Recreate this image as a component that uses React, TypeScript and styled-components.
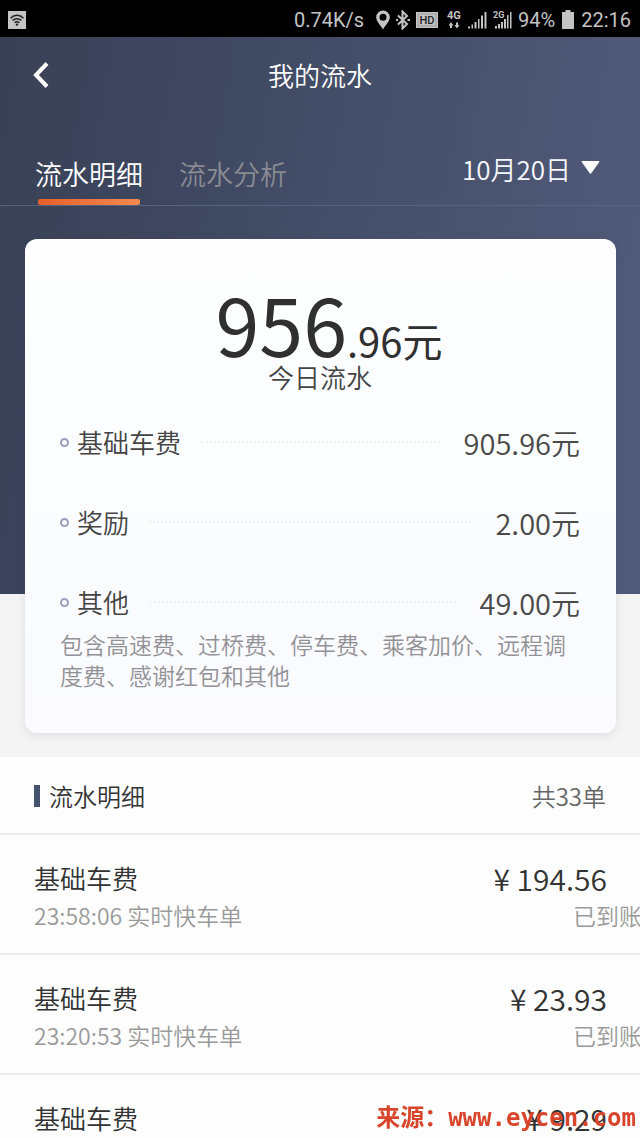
import React from "react";
import styled, { createGlobalStyle } from "styled-components";

const GlobalStyle = createGlobalStyle`
  *, *::before, *::after { box-sizing: border-box; }
  body {
    margin: 0;
    background: #fdfdfd;
    font-family: "Noto Sans CJK SC", sans-serif;
    font-weight: 350;
    color: #333;
  }
  h1, h2, p, ul, dl, dd, dt { margin: 0; padding: 0; font-weight: inherit; }
  button { font: inherit; color: inherit; background: none; border: 0; padding: 0; cursor: pointer; }
`;

const Screen = styled.div`
  height: 100vh;
  overflow: hidden;
  display: flex;
  flex-direction: column;
  > * { flex-shrink: 0; }
`;

const StatusBar = styled.div`
  height: 37px;
  padding: 2px 9px 0 8px;
  display: flex;
  align-items: center;
  justify-content: space-between;
  background: #000;
  color: #c4c4c4;
  font: 400 20px/24px Roboto, sans-serif;
  svg { display: block; }
`;

const StatusGroup = styled.div`
  display: flex;
  align-items: center;
  gap: 6px;
`;

const NetSpeed = styled.span`
  margin-right: 6px;
`;

const Hero = styled.header`
  padding-bottom: 24px;
  background: linear-gradient(100deg, #384154 0%, #3f4760 28%, #444f69 50%, #4d5775 80%, #505a7a 100%)
    no-repeat 0 0 / 100% calc(100% - 163px) #f4f4f4;
`;

const TitleBar = styled.div`
  height: 76px;
  padding: 0 30px;
  display: grid;
  grid-template-columns: 24px 1fr 24px;
  align-items: center;
  color: #fff;
`;

const BackButton = styled.button`
  display: flex;
  svg { display: block; }
`;

const Title = styled.h1`
  font-size: 26px;
  line-height: 38px;
  text-align: center;
`;

const TabBar = styled.nav`
  height: 93px;
  padding: 0 40px 0 35px;
  display: flex;
  justify-content: space-between;
  align-items: flex-end;
  border-bottom: 1px solid #566480;
`;

const Tabs = styled.div`
  display: flex;
  gap: 36px;
`;

const Tab = styled.button<{ $active?: boolean }>`
  height: 51px;
  display: flex;
  flex-direction: column;
  justify-content: space-between;
  align-items: center;
  font-size: 27px;
  line-height: 40px;
  color: ${(p) => (p.$active ? "#fff" : "#8a8b93")};
  &::after {
    content: "";
    width: 102px;
    height: 6px;
    border-radius: 2px;
    background: ${(p) => (p.$active ? "linear-gradient(90deg, #e8602c, #f08a4c)" : "transparent")};
  }
`;

const DateButton = styled.button`
  height: 56px;
  display: flex;
  align-items: flex-start;
  gap: 10px;
  font-size: 26px;
  line-height: 40px;
  color: #f6f8ff;
  svg { display: block; margin-top: 12px; }
`;

const Card = styled.section`
  margin: 33px 24px 0 25px;
  padding: 46px 36px 42px 35px;
  border-radius: 12px;
  background: linear-gradient(180deg, #fefefe, #fbfdff 50%, #fafaff);
  box-shadow: 0 2px 8px rgba(60, 60, 90, 0.12);
`;

const Total = styled.p`
  height: 75px;
  padding-left: 18px;
  font-size: 40px;
  font-weight: 400;
  line-height: 76px;
  text-align: center;
  white-space: nowrap;
  color: #303030;
`;

const TotalWhole = styled.span`
  font-size: 79px;
`;

const TotalLabel = styled.p`
  font-size: 26px;
  line-height: 34px;
  text-align: center;
  color: #444;
`;

const Breakdown = styled.dl`
  margin-top: 28px;
  display: grid;
  row-gap: 40px;
`;

const FeeRow = styled.div`
  height: 40px;
  display: flex;
  align-items: center;
`;

const FeeName = styled.dt`
  display: flex;
  align-items: center;
  gap: 8px;
  font-size: 26px;
  line-height: 40px;
  color: #444;
  &::before {
    content: "";
    width: 9px;
    height: 9px;
    border: 2px solid #9a9fbd;
    border-radius: 50%;
  }
`;

const Leader = styled.span`
  flex: 1;
  margin: 0 24px 0 20px;
  border-top: 2px dotted #efeef5;
`;

const FeeAmount = styled.dd`
  font-size: 29px;
  line-height: 40px;
  color: #4a4a4a;
`;

const Note = styled.p`
  margin-top: 7px;
  font-size: 23px;
  line-height: 31px;
  color: #929296;
`;

const ListHeader = styled.div`
  height: 78px;
  padding: 2px 34px 0 34px;
  display: flex;
  align-items: center;
  justify-content: space-between;
  border-bottom: 2px solid #ececec;
  font-size: 24px;
  line-height: 36px;
`;

const ListTitle = styled.h2`
  display: flex;
  align-items: center;
  gap: 9px;
  font-size: 24px;
  &::before {
    content: "";
    width: 6px;
    height: 22px;
    background: #44546c;
  }
`;

const Count = styled.span`
  color: #666;
`;

const Records = styled.ul`
  list-style: none;
`;

const RecordItem = styled.li`
  height: 120px;
  padding: 23px 0 0 34px;
  border-bottom: 2px solid #ececec;
`;

const RecordLine = styled.div<{ $sub?: boolean }>`
  display: flex;
  justify-content: space-between;
  padding-right: ${(p) => (p.$sub ? 0 : 33)}px;
  margin-right: ${(p) => (p.$sub ? -2 : 0)}px;
  font-size: ${(p) => (p.$sub ? 23 : 26)}px;
  line-height: ${(p) => (p.$sub ? 34 : 40)}px;
  color: ${(p) => (p.$sub ? "#9a9a9a" : "#333")};
`;

const Price = styled.span`
  font-size: 30px;
`;

const Watermark = styled.div`
  position: fixed;
  right: 4px;
  bottom: 4px;
  font: 700 24px/32px "DejaVu Sans Mono", "Noto Sans CJK SC", monospace;
  white-space: nowrap;
  color: #d8452a;
`;

const fees = [
  { name: "基础车费", amount: "905.96元" },
  { name: "奖励", amount: "2.00元" },
  { name: "其他", amount: "49.00元" },
];

const records = [
  { name: "基础车费", price: "¥ 194.56", time: "23:58:06 实时快车单", state: "已到账" },
  { name: "基础车费", price: "¥ 23.93", time: "23:20:53 实时快车单", state: "已到账" },
  { name: "基础车费", price: "¥ 9.29" },
];

const WifiIcon = () => (
  <svg width="18" height="18" viewBox="0 0 18 18" fill="none" stroke="#222" strokeWidth="1.5">
    <rect width="18" height="18" fill="#c4c4c4" stroke="none" />
    <path d="M2.5 7.2C6.2 3.4 11.8 3.4 15.5 7.2M4.6 9.6c2.5-2.6 6.3-2.6 8.8 0M6.7 11.8c1.3-1.4 3.3-1.4 4.6 0" />
    <circle cx="9" cy="13.6" r="1.2" fill="#222" stroke="none" />
  </svg>
);

const PinIcon = () => (
  <svg width="14" height="20" viewBox="0 0 14 20">
    <path
      fill="#c4c4c4"
      fillRule="evenodd"
      d="M7 .5a6.8 6.8 0 0 1 6.8 6.8C13.8 11.5 9.5 15 7 19.5 4.5 15 .2 11.5.2 7.3A6.8 6.8 0 0 1 7 .5Zm0 3.2a3.5 3.5 0 1 0 0 7 3.5 3.5 0 0 0 0-7Z"
    />
  </svg>
);

const BluetoothIcon = () => (
  <svg width="14" height="20" viewBox="0 0 14 20" fill="none" stroke="#c4c4c4" strokeWidth="2">
    <path d="M2 5.500l9 8.500-4.500 4.500V1.500l4.500 4.500-9 8.500" />
    <path d="M0 10h2M11.500 10H14" />
  </svg>
);

const HdIcon = () => (
  <svg width="22" height="16" viewBox="0 0 22 16">
    <rect width="22" height="16" fill="#c4c4c4" />
    <rect x="2" y="2" width="18" height="12" fill="none" stroke="#999" />
    <text x="11" y="12" fontSize="11" fontWeight="500" textAnchor="middle" fill="#222">HD</text>
  </svg>
);

const DataIcon = () => (
  <svg width="18" height="24" viewBox="0 0 18 24" fill="#c4c4c4">
    <text x="3" y="11" fontSize="11" fontWeight="700">4G</text>
    <path d="M4.500 17.500l2.500-3.500 2.500 3.500H8V20H6v-2.500zM10.500 17H12v-2.500h2V17h1.500L13 20.500z" />
  </svg>
);

const SignalIcon = ({ label }: { label?: string }) => (
  <svg width="19" height="20" viewBox="0 0 19 20" fill="#c4c4c4">
    <path
      d={
        label
          ? "M2 16h2v2.500H2zM5 14h2v4.500H5zM8 12h2v6.500H8zM11 9h2v9.500h-2zM14 5h1.500v13.500H14zM17 2h1.500v16.500H17z"
          : "M0 16.500h2v2H0zM3.500 14.500h1.500v4H3.500zM6.500 12h2v6.500h-2zM10 9h1.500v9.500H10zM13 5.500h2v13h-2zM16.500 2h2v16.500h-2z"
      }
    />
    {label && <text x="0" y="8" fontSize="9" fontWeight="700">{label}</text>}
  </svg>
);

const BatteryIcon = () => (
  <svg width="14" height="20" viewBox="0 0 14 20" fill="#c4c4c4">
    <path d="M4.500 0h5v2H13v17H1V2h3.500z" />
  </svg>
);

export default function App() {
  return (
    <>
      <GlobalStyle />
      <Screen>
        <StatusBar>
          <WifiIcon />
          <StatusGroup>
            <NetSpeed>0.74K/s</NetSpeed>
            <PinIcon />
            <BluetoothIcon />
            <HdIcon />
            <DataIcon />
            <SignalIcon />
            <SignalIcon label="2G" />
            <span>94%</span>
            <BatteryIcon />
            <span>22:16</span>
          </StatusGroup>
        </StatusBar>

        <Hero>
          <TitleBar>
            <BackButton aria-label="返回">
              <svg width="20" height="26" viewBox="0 0 20 26" fill="none" stroke="#fff" strokeWidth="4">
                <path d="M17 1.500L6 13l11 11.500" />
              </svg>
            </BackButton>
            <Title>我的流水</Title>
          </TitleBar>
          <TabBar>
            <Tabs>
              <Tab $active>流水明细</Tab>
              <Tab>流水分析</Tab>
            </Tabs>
            <DateButton>
              10月20日
              <svg width="19" height="13" viewBox="0 0 19 13" fill="#fff">
                <path d="M1.500 0h16q1.500 0 .6 1.300L10.500 12q-1 1.300-2 0L.9 1.300Q0 0 1.500 0Z" />
              </svg>
            </DateButton>
          </TabBar>

          <Card>
            <Total>
              <TotalWhole>956</TotalWhole>.96元
            </Total>
            <TotalLabel>今日流水</TotalLabel>
            <Breakdown>
              {fees.map((fee) => (
                <FeeRow key={fee.name}>
                  <FeeName>{fee.name}</FeeName>
                  <Leader />
                  <FeeAmount>{fee.amount}</FeeAmount>
                </FeeRow>
              ))}
            </Breakdown>
            <Note>包含高速费、过桥费、停车费、乘客加价、远程调度费、感谢红包和其他</Note>
          </Card>
        </Hero>

        <main>
          <ListHeader>
            <ListTitle>流水明细</ListTitle>
            <Count>共33单</Count>
          </ListHeader>
          <Records>
            {records.map((record) => (
              <RecordItem key={record.price}>
                <RecordLine>
                  <span>{record.name}</span>
                  <Price>{record.price}</Price>
                </RecordLine>
                {record.time && (
                  <RecordLine $sub>
                    <span>{record.time}</span>
                    <span>{record.state}</span>
                  </RecordLine>
                )}
              </RecordItem>
            ))}
          </Records>
        </main>
      </Screen>
      <Watermark>来源：www.eycen.com</Watermark>
    </>
  );
}
